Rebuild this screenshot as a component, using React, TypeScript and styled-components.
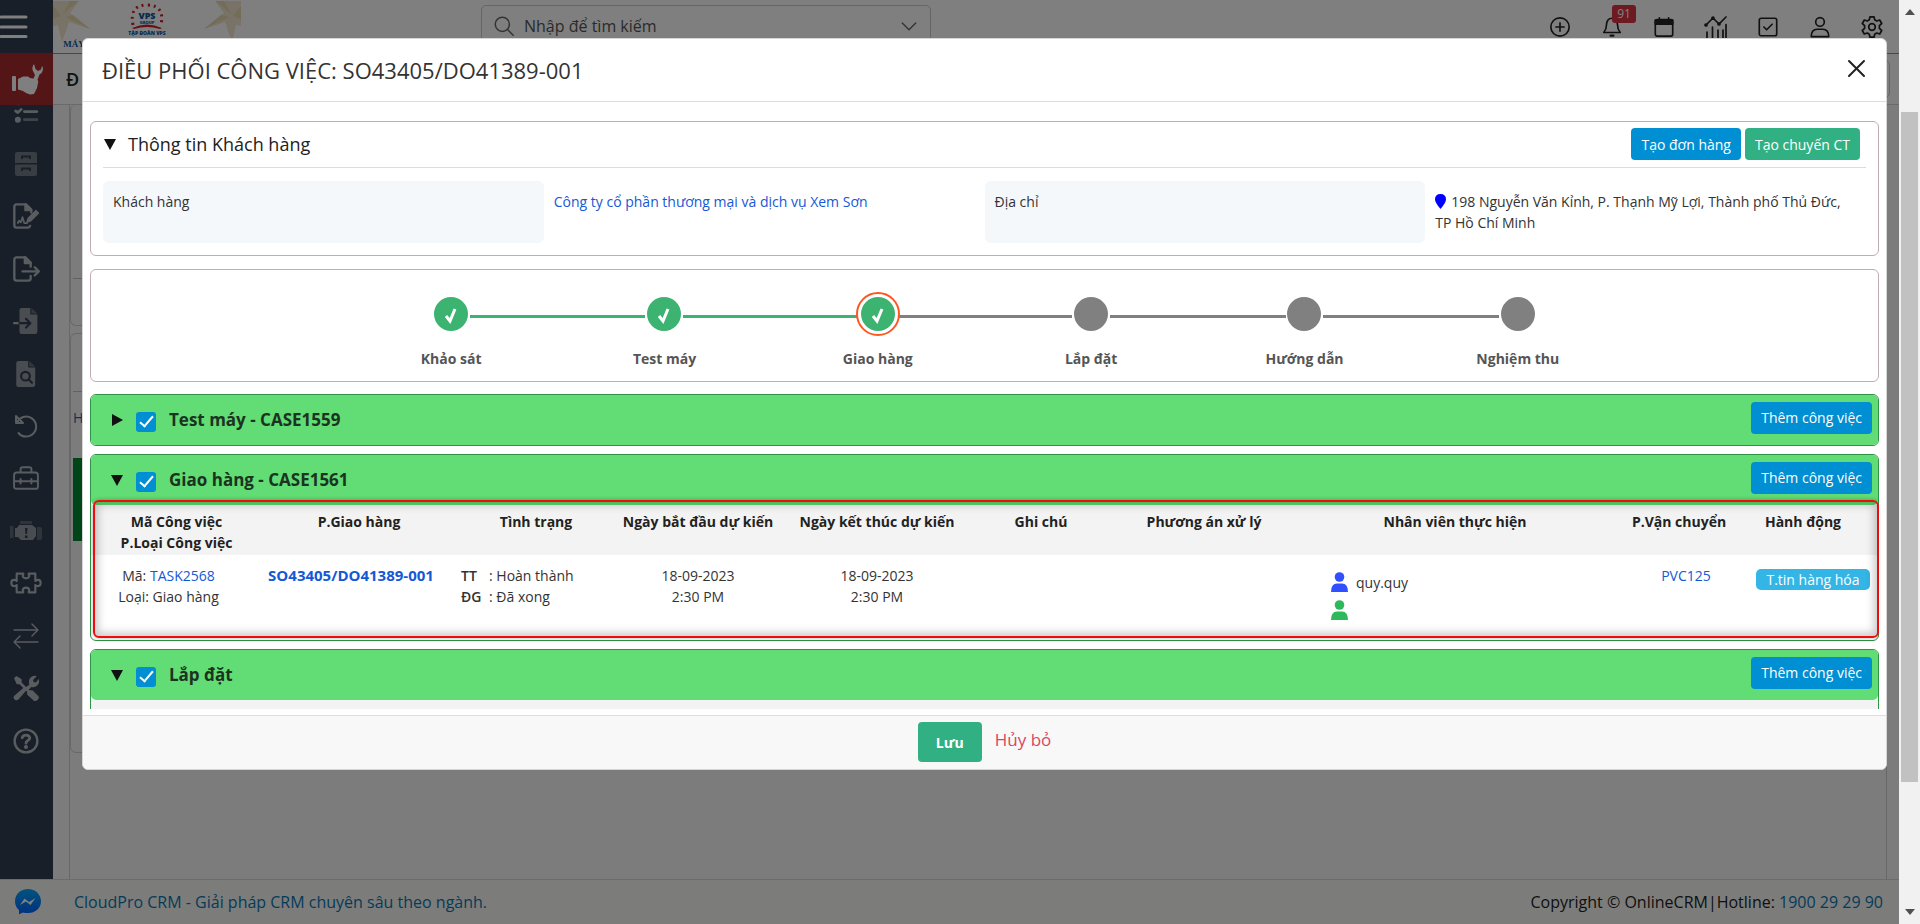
import React from "react";
import styled, { createGlobalStyle, css } from "styled-components";

const GlobalStyle = createGlobalStyle`
  *, *::before, *::after { box-sizing: border-box; }
  html, body { margin: 0; padding: 0; }
  body {
    font-family: "Open Sans", "Noto Sans", sans-serif;
    font-size: 14px;
    line-height: 21px;
    color: #333;
    overflow: hidden;
  }
  button, input { font-family: inherit; }
  a { color: #1558d6; text-decoration: none; }
`;

/* ---------- page shell ---------- */

const Page = styled.div`
  display: flex;
  height: 100vh;
`;

const Shell = styled.div`
  position: relative;
  flex: 1;
  min-width: 0;
  display: flex;
  flex-direction: column;
  background: #f8f8fb;
`;

const Scrollbar = styled.div`
  width: 21px;
  display: flex;
  flex-direction: column;
  align-items: center;
  justify-content: space-between;
  background: #f1f1f1;
  padding: 9px 0;
`;

const ScrollThumb = styled.div`
  width: 17px;
  flex: 0 1 671px;
  margin: 97px 0 127px;
  background: #c1c1c1;
`;

const Columns = styled.div`
  flex: 1;
  min-height: 0;
  display: flex;
`;

const Sidebar = styled.nav`
  width: 53px;
  display: flex;
  flex-direction: column;
  background: #303e50;
`;

const PlainButton = styled.button`
  display: flex;
  align-items: center;
  justify-content: center;
  border: 0;
  padding: 0;
  background: none;
  color: inherit;
  cursor: pointer;
`;

const MenuButton = styled(PlainButton)`
  height: 53px;
  flex: none;
  color: #fff;
  justify-content: flex-start;
`;

const ActiveModule = styled(PlainButton)`
  height: 52px;
  flex: none;
  background: #a82a2c;
  color: #fff;
`;

const NavClip = styled.div`
  flex: 1;
  min-height: 0;
  overflow: hidden;
`;

const NavList = styled.ul`
  list-style: none;
  height: 682px;
  margin: -20px 0 0;
  padding: 0;
  display: grid;
  grid-auto-rows: 1fr;
`;

const NavItem = styled.li`
  display: flex;
  align-items: center;
  justify-content: center;
  padding-right: 1px;
  color: #b4bac0;
`;

const Content = styled.div`
  flex: 1;
  min-width: 0;
  display: flex;
  flex-direction: column;
`;

const TopBar = styled.header`
  height: 54px;
  flex: none;
  display: flex;
  align-items: flex-start;
  background: #fff;
  border-bottom: 1px solid #34c279;
`;

const Logo = styled.div`
  width: 428px;
  flex: none;
`;

const SearchBox = styled.label`
  width: 450px;
  height: 42px;
  margin-top: 5px;
  padding: 0 12px;
  display: flex;
  align-items: center;
  gap: 10px;
  border: 1px solid #ccc;
  border-radius: 5px;
  color: #666;
`;

const SearchInput = styled.input`
  flex: 1;
  min-width: 0;
  border: 0;
  outline: 0;
  padding: 0;
  background: none;
  font-size: 16px;
  &::placeholder { color: #555; opacity: 1; }
`;

const Tools = styled.div`
  margin-left: auto;
  margin-right: 15px;
  padding-top: 15px;
  display: flex;
  gap: 28px;
  color: #222;
`;

const Tool = styled(PlainButton)`
  position: relative;
  width: 24px;
  height: 24px;
`;

const Badge = styled.span`
  position: absolute;
  left: 12px;
  top: -10px;
  width: 24px;
  height: 18px;
  border-radius: 3px;
  background: #dc3545;
  color: #fff;
  font-size: 12px;
  line-height: 18px;
`;

const SubHeader = styled.div`
  height: 51px;
  flex: none;
  display: flex;
  align-items: center;
  justify-content: space-between;
  padding: 0 9px 0 13px;
  background: #fff;
  border-bottom: 1px solid #d4d4d8;
  font-size: 18px;
  font-weight: 600;
  color: #222;
`;

const SubHeaderBox = styled.div`
  width: 200px;
  height: 38px;
  border: 1px solid #ccc;
  border-radius: 5px;
`;

const Workspace = styled.div`
  flex: 1;
  min-height: 0;
  overflow: hidden;
  margin: 0 12px 0 16px;
  border: solid #d0d0d4;
  border-width: 0 1px;
`;

const Block = styled.div<{ $height: number }>`
  height: ${(p) => p.$height}px;
  margin-bottom: 7px;
  border: 1px solid #d0d0d4;
  border-top-width: ${(p) => (p.$height < 300 ? 0 : 1)}px;
  border-radius: 6px;
  padding: 0 2px;
`;

const BlockHead = styled.div<{ $height: number }>`
  height: ${(p) => p.$height}px;
  border-bottom: 1px solid #c4c4c8;
`;

const BlockLabel = styled.div`
  height: 66px;
  padding-top: 15px;
  color: #1a6fb0;
`;

const GreenBlock = styled.div`
  height: 83px;
  background: #008a2e;
`;

const PageFooter = styled.footer`
  height: 45px;
  flex: none;
  display: flex;
  align-items: center;
  gap: 33px;
  padding: 0 16px 0 15px;
  background: #f8faf7;
  border-top: 1px solid #d8d8dc;
  font-size: 16px;
  color: #222;
  a { color: #0b76b0; }
`;

const FooterLink = styled.a`
  margin-right: auto;
`;

const Backdrop = styled.div`
  position: absolute;
  inset: 0;
  padding: 38px 12px 154px 82px;
  display: flex;
  background: rgba(0, 0, 0, 0.5);
`;

/* ---------- dialog ---------- */

const Dialog = styled.section`
  flex: 1;
  min-width: 0;
  display: flex;
  flex-direction: column;
  overflow: hidden;
  border: 1px solid #d6d6d6;
  border-radius: 6px;
  background: #fff;
`;

const DialogHeader = styled.header`
  height: 63px;
  flex: none;
  display: flex;
  align-items: center;
  justify-content: space-between;
  padding: 0 20px 3px 19px;
  border-bottom: 1px solid #ddd;
`;

const DialogTitle = styled.h1`
  margin: 0;
  padding-top: 2px;
  font-size: 22px;
  line-height: 28px;
  font-weight: 400;
`;

const DialogBody = styled.div`
  flex: 1;
  min-height: 0;
  overflow: hidden;
  margin: 19px 7px 6px;
`;

const DialogFooter = styled.footer`
  height: 54px;
  flex: none;
  display: flex;
  justify-content: center;
  padding-top: 6px;
  gap: 13px;
  border-top: 1px solid #ddd;
  background: #f8f8f8;
`;

const SaveButton = styled.button`
  width: 64px;
  height: 40px;
  border: 0;
  border-radius: 4px;
  background: #31b083;
  color: #fff;
  font-size: 14px;
  font-weight: 700;
`;

const CancelLink = styled.a`
  padding-top: 7px;
  font-size: 17px;
  color: #dc4560;
`;

const Panel = styled.section`
  border: 1px solid #c0adb1;
  border-radius: 6px;
  padding: 0 12px;
  margin-bottom: 13px;
`;

const PanelHead = styled.header`
  height: 46px;
  display: flex;
  align-items: center;
  gap: 4px;
  border-bottom: 1px solid #ddd;
  padding: 0 6px 1px 0;
`;

const Heading = styled.h2<{ $strong?: boolean }>`
  margin: 0 auto 0 0;
  font-size: ${(p) => (p.$strong ? 17 : 18)}px;
  line-height: 24px;
  font-weight: ${(p) => (p.$strong ? 700 : 500)};
  color: ${(p) => (p.$strong ? "#1b3320" : "#222")};
`;

const Toggle = styled(PlainButton)<{ $open?: boolean }>`
  width: 14px;
  height: 14px;
  margin-right: 7px;
  &::before {
    content: "";
    border: 6px solid transparent;
    ${(p) =>
      p.$open
        ? css`border-top: 11px solid #111; border-bottom: 0;`
        : css`border-left: 11px solid #111; border-right: 0;`}
  }
`;

const ActionButton = styled.button<{ $tone?: "green" }>`
  height: 32px;
  padding: 0 10px;
  border: 0;
  border-radius: 4px;
  background: ${(p) => (p.$tone === "green" ? "#31b083" : "#008fd3")};
  color: #fff;
  font-size: 14px;
  line-height: 21px;
  white-space: nowrap;
`;

const Fields = styled.dl`
  margin: 13px 0 12px;
  display: grid;
  grid-template-columns: repeat(4, 1fr);
`;

const FieldLabel = styled.dt`
  min-height: 62px;
  padding: 10px;
  border-radius: 6px;
  background: #f4f8fb;
`;

const FieldValue = styled.dd`
  margin: 0;
  padding: 10px;
  svg { vertical-align: -2px; margin-right: 5px; }
`;

const StepsPanel = styled(Panel)`
  display: flex;
  justify-content: center;
  padding: 22px 0 12px;
  margin-bottom: 12px;
`;

const Steps = styled.ol`
  list-style: none;
  width: 1280px;
  margin: 0;
  padding: 0;
  display: grid;
  grid-template-columns: repeat(6, 1fr);
`;

const Step = styled.li<{ $linked?: boolean }>`
  position: relative;
  height: 77px;
  display: flex;
  flex-direction: column;
  align-items: center;
  justify-content: space-between;
  font-weight: 700;
  color: #555;
  &:not(:last-child)::after {
    content: "";
    position: absolute;
    top: 23px;
    left: calc(50% + 19px);
    right: calc(19px - 50%);
    height: 3px;
    background: ${(p) => (p.$linked ? "#3db371" : "#808080")};
  }
`;

const StepDot = styled.span<{ $done?: boolean; $current?: boolean }>`
  z-index: 1;
  width: 44px;
  height: 44px;
  padding: 3px;
  border-radius: 50%;
  border: 2px solid ${(p) => (p.$current ? "#ff5722" : "transparent")};
  background: ${(p) => (p.$current ? "#fff" : "none")};
  display: flex;
  svg {
    width: 34px;
    height: 34px;
    border-radius: 50%;
    background: ${(p) => (p.$done ? "#3db371" : "#808080")};
  }
`;

const Case = styled.section`
  position: relative;
  margin-bottom: 8px;
  border: 1px solid #2f9445;
  border-radius: 6px;
  background: #fff;
`;

const CaseHead = styled.header`
  height: 50px;
  display: flex;
  align-items: center;
  padding: 0 6px 0 19px;
  border-radius: 5px;
  background: #62dc74;
  ${ActionButton} { margin-bottom: 5px; }
`;

const CaseLabel = styled.label`
  display: flex;
  align-items: center;
  gap: 13px;
  margin-right: auto;
`;

const Checkbox = styled.input`
  appearance: none;
  width: 20px;
  height: 20px;
  margin: 3px 0 0 5px;
  border-radius: 3px;
  background: #008fd3;
  display: flex;
  justify-content: center;
  &::after {
    content: "";
    width: 7px;
    height: 14px;
    margin-top: 1px;
    border: solid #fff;
    border-width: 0 2px 2px 0;
    transform: rotate(40deg);
  }
`;

const TaskTable = styled.table`
  width: 100%;
  table-layout: fixed;
  border-collapse: collapse;
  text-align: center;
  th {
    height: 50px;
    padding: 6px 0 0;
    vertical-align: top;
    font-weight: 700;
    color: #222;
    background: #f3f3f3;
    white-space: nowrap;
  }
  th:last-child { padding-right: 20px; }
  td {
    height: 85px;
    padding: 10px 0 0;
    vertical-align: top;
  }
`;

const ShiftedCell = styled.td`
  && { padding-right: 16px; }
`;

const OrderLink = styled.a`
  font-size: 15px;
  font-weight: 700;
`;

const StatusCell = styled.td`
  text-align: left;
  && { padding-left: 5px; }
`;

const StatusRow = styled.div`
  display: grid;
  grid-template-columns: 28px 1fr;
  span:first-child { font-weight: 600; }
`;

const StaffCell = styled.td`
  text-align: left;
  && { padding: 13px 0 0 31px; }
`;

const Staff = styled.div`
  height: 28px;
  display: flex;
  align-items: center;
  gap: 8px;
`;

const TripCell = styled.td`
  && { padding-left: 14px; }
`;

const GoodsButton = styled.button`
  height: 21px;
  width: 114px;
  margin-top: 4px;
  padding: 0;
  border: 0;
  border-radius: 5px;
  background: #33b5e5;
  color: #fff;
  font-size: 14px;
  line-height: 20px;
  font-weight: 500;
  white-space: nowrap;
`;

const Highlight = styled.div`
  position: absolute;
  inset: 45px -1px 2px 2px;
  border: 2px solid #f00c0c;
  border-radius: 6px;
  box-shadow: inset 0 0 9px 3px rgba(0, 0, 0, 0.22), 0 0 4px rgba(0, 0, 0, 0.3);
  pointer-events: none;
`;

const NextRows = styled.div`
  height: 50px;
  background: #f3f3f3;
`;

/* ---------- icons ---------- */

type IconProps = { size?: number; children: React.ReactNode; width?: number };

const Line = ({ size = 24, width = 2, children }: IconProps) => (
  <svg width={size} height={size} viewBox="0 0 24 24" fill="none" stroke="currentColor"
    strokeWidth={width} strokeLinecap="round" strokeLinejoin="round" aria-hidden>
    {children}
  </svg>
);

const Engine = () => (
  <svg width="32" height="20" viewBox="0 0 32 20" fill="currentColor" aria-hidden>
    <path opacity=".35" d="M10 0h12v3H10zM0 5h3.500v12H0zM27 6h3q2 0 2 2v9q0 2-2 2h-3z" />
    <path opacity=".75" d="M9 4h13l4 3v8l-3 4H11l-3-3H5V7h2z" />
    <path fill="#303e50" d="M15 7h2.500L17 13h-1.500zM15 14.500h2.500V17H15z" />
  </svg>
);

const navIcons: { name: string; icon: React.ReactNode }[] = [
  { name: "Danh sách", icon: <Line size={26} width={2.6}><path d="M3 4l2 1.500L7 3M2.500 12l2 1.500L7.500 10.500M10.500 5H22M10.500 12.500H22" /><circle cx="4.500" cy="20" r="1.500" fill="currentColor" /><path d="M10.500 20H22" opacity=".6" /></Line> },
  { name: "Lưu trữ", icon: <Line width={0}><path fill="currentColor" opacity=".5" fillRule="evenodd" d="M3 0h18q2 0 2 2v9H1V2q0-2 2-2zM1 12.500h22V22q0 2-2 2H3q-2 0-2-2zM7 7h2V5.500h6V7h2V4q0-.5-.5-.5h-9Q7 3.500 7 4zM7 19h2v-1.500h6V19h2v-3q0-.5-.5-.5h-9q-.5 0-.5.5z" /></Line> },
  { name: "Hợp đồng", icon: <Line size={28}><path d="M15.500 20.500q-.5 1.500-2 1.500H4q-2 0-2-2V4q0-2 2-2h8l4.500 4.500V9" /><path d="M11.500 2v5H16.500z" fill="currentColor" /><path d="M5 18l1-2 1.500 1.500L9 13l1.500 5H13" strokeWidth="1.500" /><path d="M13 17l1-3 6.500-6.500 2 2L16 16z" fill="currentColor" strokeWidth="1.500" /></Line> },
  { name: "Xuất", icon: <Line size={28}><path d="M16 18v2q0 2-2 2H4q-2 0-2-2V4q0-2 2-2h7.500L16 6.500V10M9 14h14M19.500 10.500L23 14l-3.500 3.500" /><path d="M11 2v5h5z" fill="currentColor" /></Line> },
  { name: "Nhập", icon: <Line size={26}><path fill="currentColor" stroke="none" opacity=".75" d="M8 0h8v6h6.500v16q0 2-2 2H8q-2 0-2-2V2q0-2 2-2z" /><path fill="currentColor" stroke="none" opacity=".4" d="M17 0l5.500 5H17z" /><path d="M1 14h5" /><path d="M6 14h9M12 10l4 4-4 4" stroke="#303e50" /></Line> },
  { name: "Tra cứu", icon: <Line size={26}><path fill="currentColor" stroke="none" opacity=".75" d="M5 0h9v6h6.500v16q0 2-2 2H5q-2 0-2-2V2q0-2 2-2z" /><path fill="currentColor" stroke="none" opacity=".4" d="M15 0l5.500 5H15z" /><g stroke="#303e50"><circle cx="11.500" cy="14" r="4" /><path d="M14.500 17l3 3" /></g></Line> },
  { name: "Hoàn tác", icon: <Line size={24}><path d="M2 2v7h7M3 8.500A10 10 0 1 1 4.500 19M9 9L2 2" /></Line> },
  { name: "Dụng cụ", icon: <Line size={26} width={1.800}><path d="M3.500 7h17q2.500 0 2.500 2.500V20q0 2-2 2H3q-2 0-2-2V9.500Q1 7 3.500 7zM7 7V4q0-2 2-2h6q2 0 2 2v3M1 15h22M7 13v4M17 13v4" /></Line> },
  { name: "Cảnh báo", icon: <Engine /> },
  { name: "Mở rộng", icon: <Line size={32} width={1.600}><path d="M5 5h5q0 1-.5 1.800.500 1.700 2.500 1.700t2.500-1.700Q14 6 14 5h5v5.500q1-.8 2-.8 2 0 2 2.300t-2 2.300q-1 0-2-.8V19h-5q0-1 .5-1.800-.5-1.700-2.500-1.700t-2.500 1.700Q10 18 10 19H5v-5.500q-1 .8-2 .8-2 0-2-2.300t2-2.300q1 0 2 .8z" /></Line> },
  { name: "Chuyển đổi", icon: <Line size={26} width={1.300}><path d="M1 6.500h22M17.500 1L23 6.500 17.500 12M23 17.500H1M6.500 12L1 17.500 6.500 23" /></Line> },
  { name: "Cài đặt", icon: <Line size={26} width={0}><path fill="currentColor" d="M1 3l2-2 5 3v3l4 4 3-2q-1-4 1-6.500Q18.500 0 22 1l-3.500 3.500.500 2 2 .5L24 3.500q1 3.500-1.500 6T17 11l-2.500 2.500.5.5h3l5.500 5.500q1 1.500-.5 3l-1 1q-1.500 1-3 0L13 18v-2.500l-1-1L6 21.500q-2 3-4.500 1t1-4.500L9.500 12 6 8.500H3.500z" /></Line> },
  { name: "Trợ giúp", icon: <Line size={26} width={2.200}><circle cx="12" cy="12" r="10.500" /><path d="M8.500 9q.5-2.500 3.500-2.500t3.500 2.700q0 1.500-2 2.500-1.500.8-1.500 2.300" strokeWidth="2.600" /><circle cx="12" cy="17.500" r=".8" fill="currentColor" /></Line> },
];

const HandWrench = () => (
  <svg width="34" height="32" viewBox="0 0 34 32" fill="#fff" aria-hidden>
    <rect x="2" y="13" width="4" height="15" rx="1" />
    <path d="M8 16l5-2.500h5l2 1.500 6 1q3 1 2 4l-1 5-3 6-4 .5q-4-1-7-3.500L8 26.500z" />
    <path d="M24 1Q21 5 23.500 9l1.500 3-2 5 4 1 2.500-6.500Q33 10 33 5l-1-2-1 3.500-3 1.500-2.500-2z" />
  </svg>
);

const Ribbon = ({ flip, x }: { flip?: boolean; x: number }) => (
  <g transform={flip ? `translate(${x} 0) scale(-1 1)` : `translate(${x} 0)`} fill="#f0e6cc">
    <path d="M0 1h26l-9 12 20 16-21-7-7 20-4-17-5 1z" />
    <path d="M10 14L25 1h-8zM12 17l25 12-17-14z" fill="#e6d8b0" />
    <path d="M0 6l8 10-8 3z" fill="#e6d8b0" />
  </g>
);

const LogoMark = () => (
  <svg width="190" height="53" viewBox="0 0 190 53" role="img" aria-label="VPS">
    <Ribbon x={0} />
    <Ribbon x={188} flip />
    <path d="M80 25Q76 5 94 5t14 20" fill="none" stroke="#c8202c" strokeWidth="3" strokeDasharray="2 4" />
    <path d="M79 28q15-7 30 0l-2 1q-13-4-26 0z" fill="#c8202c" />
    <g fill="#10549c" fontFamily="Open Sans, sans-serif" fontWeight="800" textAnchor="middle">
      <text x="94" y="19" fontSize="9">VPS</text>
      <text x="94" y="24" fontSize="4">GROUP</text>
      <text x="94" y="35" fontSize="5">TẬP ĐOÀN VPS</text>
      <text x="21" y="47" fontSize="9" fontFamily="Liberation Serif, serif">MÁY</text>
    </g>
  </svg>
);

const tools = [
  { name: "Thêm", icon: <Line size={22} width={1.800}><circle cx="12" cy="12" r="10" /><path d="M12 7.500v9M7.500 12h9" /></Line> },
  { name: "Thông báo", badge: "91", icon: <Line size={22} width={1.800}><path d="M12 2.500q5.500 0 6 7 0 5 3 8.500H3q3-3.500 3-8.500.5-7 6-7z" /><path d="M10.500 21.500h3" strokeWidth="2.500" /></Line> },
  { name: "Lịch", icon: <Line size={22} width={1.800}><rect x="2.500" y="4" width="19" height="18" rx="2" /><path d="M2.500 4.500h19V9h-19z" fill="currentColor" /><path d="M7 2v3M17 2v3" /></Line> },
  { name: "Báo cáo", icon: <Line size={24} width={1.700}><path d="M2 10l7-7 6 6 7-7M3 17v6M8.500 12v11M14 15v8M19 15v8M22 9.500V23" /><circle cx="2" cy="10" r="1" /><circle cx="9" cy="3" r="1" /><circle cx="15" cy="9" r="1" /></Line> },
  { name: "Công việc", icon: <Line size={22} width={1.800}><rect x="2.500" y="2.500" width="19" height="19" rx="2" /><path d="M7.500 12l3 3 6-6" /></Line> },
  { name: "Tài khoản", icon: <Line size={22} width={1.800}><circle cx="12" cy="6.500" r="4.700" /><path d="M2.500 22.500q0-8 6.500-8h6q6.500 0 6.500 8z" /></Line> },
  { name: "Thiết lập", icon: <Line size={24} width={1.700}><circle cx="12" cy="12" r="3.300" /><path d="M10 1.800h4l.7 3 2 1.200 3-1 2 3.500-2.300 2.100v2.800l2.300 2.100-2 3.500-3-1-2 1.200-.7 3h-4l-.7-3-2-1.200-3 1-2-3.500 2.300-2.100v-2.800L2.300 8.500l2-3.500 3 1 2-1.200z" /></Line> },
];

const Person = ({ color }: { color: string }) => (
  <svg width="17" height="20" viewBox="0 0 17 20" fill={color} aria-hidden>
    <circle cx="8.500" cy="5" r="4.800" />
    <path d="M0 20q0-8.500 6-8.500h5q6 0 6 8.500z" />
  </svg>
);

const Messenger = () => (
  <svg width="26" height="26" viewBox="0 0 26 26" role="img" aria-label="Messenger">
    <defs>
      <linearGradient id="chat" x1="0" y1="0" x2="0" y2="1">
        <stop offset="0" stopColor="#00a8ff" />
        <stop offset="1" stopColor="#0060ff" />
      </linearGradient>
    </defs>
    <path fill="url(#chat)" d="M13 0C5.500 0 0 5.300 0 12.300c0 3.700 1.500 6.700 4 8.900v4l4-1.800q2.300.7 5 .7c7.500 0 13-5 13-11.800S20.500 0 13 0z" />
    <path fill="#fff" d="M5 16l4.500-6.500 4.500 3.500 6.500-4-5 7-4.500-3.500z" />
  </svg>
);

/* ---------- data ---------- */

const steps = [
  { label: "Khảo sát", done: true, linked: true },
  { label: "Test máy", done: true, linked: true },
  { label: "Giao hàng", done: true, current: true },
  { label: "Lắp đặt" },
  { label: "Hướng dẫn" },
  { label: "Nghiệm thu" },
];

const columnWidths = [171, 194, 160, 164, 194, 134, 192, 310, 138, 130];

const CaseHeader = ({ title, open }: { title: string; open?: boolean }) => (
  <CaseHead>
    <Toggle $open={open} aria-label={title} aria-expanded={!!open} />
    <CaseLabel>
      <Checkbox type="checkbox" defaultChecked />
      <Heading as="span" $strong>{title}</Heading>
    </CaseLabel>
    <ActionButton>Thêm công việc</ActionButton>
  </CaseHead>
);

export default function App() {
  return (
    <Page>
      <GlobalStyle />
      <Shell>
        <Columns>
          <Sidebar>
            <MenuButton aria-label="Menu">
              <svg width="28" height="26" viewBox="0 0 28 26" stroke="#fff" strokeWidth="3" strokeLinecap="round">
                <path d="M1 3h25M1 13h25M1 22.500h25" />
              </svg>
            </MenuButton>
            <ActiveModule aria-label="Điều phối"><HandWrench /></ActiveModule>
            <NavClip>
              <NavList>
                {navIcons.map((n) => (
                  <NavItem key={n.name}><PlainButton aria-label={n.name}>{n.icon}</PlainButton></NavItem>
                ))}
              </NavList>
            </NavClip>
          </Sidebar>
          <Content>
            <TopBar>
              <Logo><LogoMark /></Logo>
              <SearchBox>
                <Line size={20} width={1.800}><circle cx="10" cy="10" r="8.500" /><path d="M16.500 16.500L23 23" /></Line>
                <SearchInput placeholder="Nhập để tìm kiếm" />
                <Line size={18} width={1.800}><path d="M3 8l9 9 9-9" /></Line>
              </SearchBox>
              <Tools>
                {tools.map((t) => (
                  <Tool key={t.name} aria-label={t.name}>
                    {t.icon}
                    {t.badge && <Badge>{t.badge}</Badge>}
                  </Tool>
                ))}
              </Tools>
            </TopBar>
            <SubHeader><span>Đ</span><SubHeaderBox /></SubHeader>
            <Workspace>
              <Block $height={221}><BlockHead $height={174} /></Block>
              <Block $height={420}>
                <BlockHead $height={58} />
                <BlockLabel>H</BlockLabel>
                <GreenBlock />
              </Block>
            </Workspace>
          </Content>
        </Columns>
        <PageFooter>
          <Messenger />
          <FooterLink href="#cloudpro">CloudPro CRM - Giải pháp CRM chuyên sâu theo ngành.</FooterLink>
          <span>Copyright © OnlineCRM|Hotline: <a href="#hotline">1900 29 29 90</a></span>
        </PageFooter>

        <Backdrop>
          <Dialog role="dialog" aria-labelledby="dialog-title">
            <DialogHeader>
              <DialogTitle id="dialog-title">ĐIỀU PHỐI CÔNG VIỆC: SO43405/DO41389-001</DialogTitle>
              <PlainButton aria-label="Đóng">
                <svg width="20" height="20" viewBox="0 0 20 20" stroke="#222" strokeWidth="2" strokeLinecap="round">
                  <path d="M3 2l15 15M18 2L3 17" />
                </svg>
              </PlainButton>
            </DialogHeader>

            <DialogBody>
              <Panel>
                <PanelHead>
                  <Toggle $open aria-label="Thông tin Khách hàng" aria-expanded />
                  <Heading>Thông tin Khách hàng</Heading>
                  <ActionButton>Tạo đơn hàng</ActionButton>
                  <ActionButton $tone="green">Tạo chuyến CT</ActionButton>
                </PanelHead>
                <Fields>
                  <FieldLabel>Khách hàng</FieldLabel>
                  <FieldValue><a href="#customer">Công ty cổ phần thương mại và dịch vụ Xem Sơn</a></FieldValue>
                  <FieldLabel>Địa chỉ</FieldLabel>
                  <FieldValue>
                    <svg width="11" height="15" viewBox="0 0 11 15" fill="#00f" aria-hidden>
                      <path d="M5.500 0Q11 0 11 5.500 11 8.500 5.500 15 0 8.500 0 5.500 0 0 5.500 0z" />
                    </svg>
                    198 Nguyễn Văn Kỉnh, P. Thạnh Mỹ Lợi, Thành phố Thủ Đức, TP Hồ Chí Minh
                  </FieldValue>
                </Fields>
              </Panel>

              <StepsPanel>
                <Steps>
                  {steps.map((s) => (
                    <Step key={s.label} $linked={s.linked}>
                      <StepDot $done={s.done} $current={s.current}>
                        <svg viewBox="0 0 34 34" fill="none" stroke={s.done ? "#fff" : "none"} strokeWidth="3">
                          <path d="M12 19l4 5 5-12" />
                        </svg>
                      </StepDot>
                      {s.label}
                    </Step>
                  ))}
                </Steps>
              </StepsPanel>

              <Case><CaseHeader title="Test máy - CASE1559" /></Case>

              <Case>
                <CaseHeader title="Giao hàng - CASE1561" open />
                <TaskTable>
                  <colgroup>{columnWidths.map((w, i) => <col key={i} width={w} />)}</colgroup>
                  <thead>
                    <tr>
                      <th>Mã Công việc<br />P.Loại Công việc</th>
                      <th>P.Giao hàng</th>
                      <th>Tình trạng</th>
                      <th>Ngày bắt đầu dự kiến</th>
                      <th>Ngày kết thúc dự kiến</th>
                      <th>Ghi chú</th>
                      <th>Phương án xử lý</th>
                      <th>Nhân viên thực hiện</th>
                      <th>P.Vận chuyển</th>
                      <th>Hành động</th>
                    </tr>
                  </thead>
                  <tbody>
                    <tr>
                      <ShiftedCell>Mã: <a href="#task">TASK2568</a><br />Loại: Giao hàng</ShiftedCell>
                      <ShiftedCell><OrderLink href="#order">SO43405/DO41389-001</OrderLink></ShiftedCell>
                      <StatusCell>
                        <StatusRow><span>TT</span><span>: Hoàn thành</span></StatusRow>
                        <StatusRow><span>ĐG</span><span>: Đã xong</span></StatusRow>
                      </StatusCell>
                      <td>18-09-2023<br />2:30 PM</td>
                      <td>18-09-2023<br />2:30 PM</td>
                      <td />
                      <td />
                      <StaffCell>
                        <Staff><Person color="#304ffe" />quy.quy</Staff>
                        <Staff><Person color="#2eb85c" /></Staff>
                      </StaffCell>
                      <TripCell><a href="#trip">PVC125</a></TripCell>
                      <td><GoodsButton>T.tin hàng hóa</GoodsButton></td>
                    </tr>
                  </tbody>
                </TaskTable>
                <Highlight />
              </Case>

              <Case>
                <CaseHeader title="Lắp đặt" open />
                <NextRows />
              </Case>
            </DialogBody>

            <DialogFooter>
              <SaveButton>Lưu</SaveButton>
              <CancelLink href="#cancel">Hủy bỏ</CancelLink>
            </DialogFooter>
          </Dialog>
        </Backdrop>
      </Shell>
      <Scrollbar aria-hidden>
        <svg width="10" height="6" viewBox="0 0 10 6" fill="#505050"><path d="M0 6l5-6 5 6z" /></svg>
        <ScrollThumb />
        <svg width="10" height="6" viewBox="0 0 10 6" fill="#505050"><path d="M0 0l5 6 5-6z" /></svg>
      </Scrollbar>
    </Page>
  );
}
